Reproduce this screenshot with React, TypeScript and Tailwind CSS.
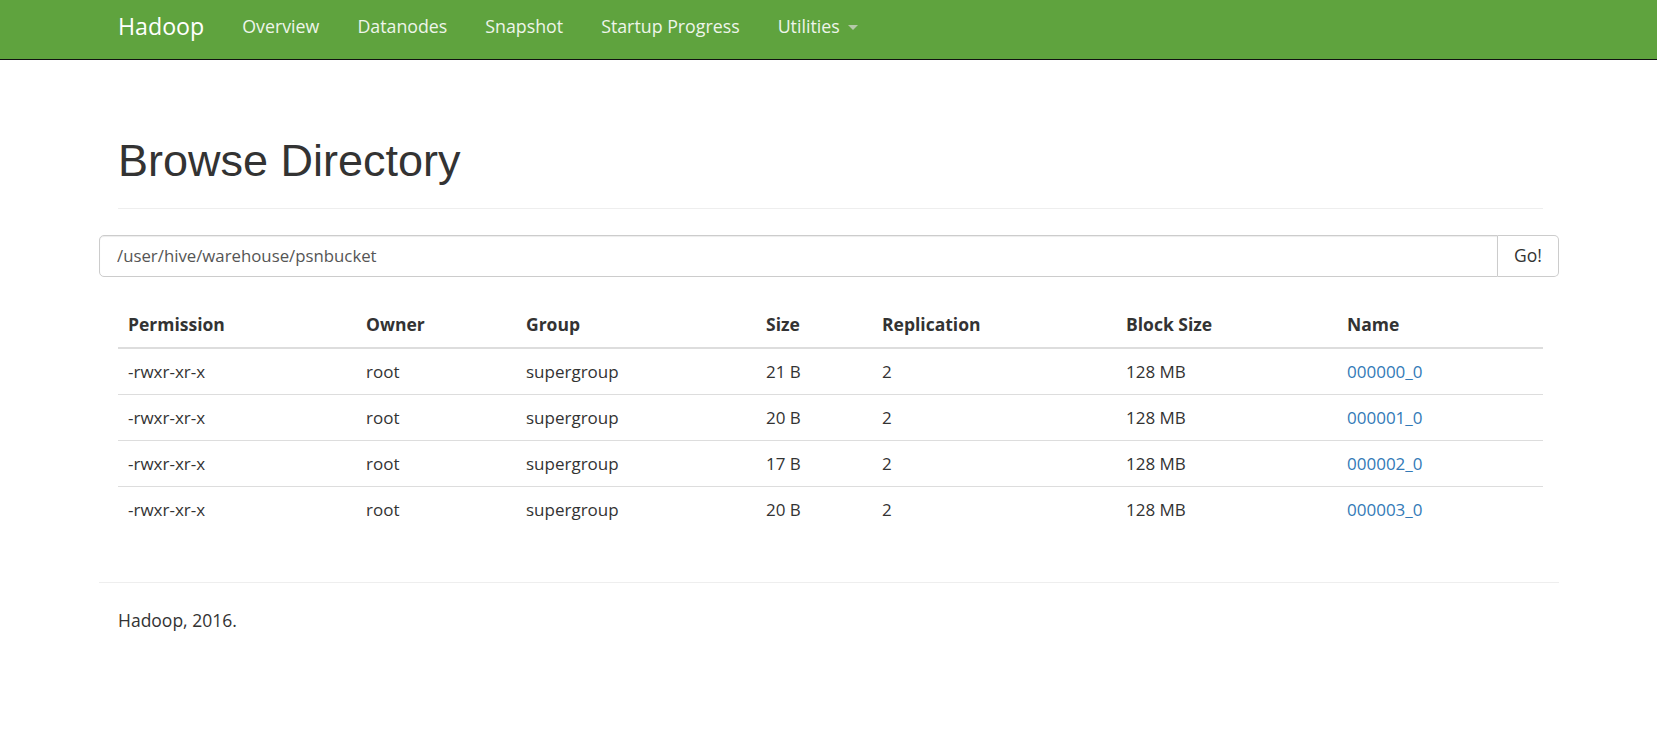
const files = [
  { name: "000000_0", size: "21 B" },
  { name: "000001_0", size: "20 B" },
  { name: "000002_0", size: "17 B" },
  { name: "000003_0", size: "20 B" },
];

const navLinks = ["Overview", "Datanodes", "Snapshot", "Startup Progress"];

function Navbar() {
  return (
    <header className="h-[60px] bg-[#5fa33e] border-b border-[#111]">
      <div className="ml-[99px] w-[1460px] pl-[19px] flex items-start pt-[14px]">
        <a className="text-[23.2px] leading-[25px] text-white pr-[19px]">Hadoop</a>
        {navLinks.map((l) => (
          <a key={l} className="px-[19px] text-[17.8px] leading-[25px] text-[#eef5ea]">
            {l}
          </a>
        ))}
        <a className="px-[19px] text-[17.8px] leading-[25px] text-[#eef5ea] flex items-center">
          Utilities
          <span className="ml-[8px] mt-[2px] w-0 h-0 border-t-[5px] border-t-[#b5c9a9] border-x-[5px] border-x-transparent" />
        </a>
      </div>
    </header>
  );
}

export default function App() {
  return (
    <div className="min-h-screen bg-white text-[#333] text-[17.5px] leading-[25px] font-['Open_Sans',sans-serif]">
      <Navbar />
      <div className="ml-[99px] w-[1460px]">
        {/* page header */}
        <div className="pl-[19px] pr-[16px] pt-[76px]">
          <div className="pb-[22px] border-b border-[#eee]">
            <h1 className="text-[45px] leading-[49.5px] font-['Liberation_Sans',Arial,sans-serif] text-[#333]">
              Browse Directory
            </h1>
          </div>
        </div>

        {/* path box */}
        <form className="mt-[26px] flex h-[42px]" onSubmit={(e) => e.preventDefault()}>
          <input
            type="text"
            defaultValue="/user/hive/warehouse/psnbucket"
            className="flex-1 min-w-0 border border-[#ccc] rounded-l-[5px] pl-[17px] pr-[15px] text-[16.8px] text-[#555] outline-none shadow-[inset_0_1px_1px_rgba(0,0,0,0.075)]"
          />
          <button
            type="submit"
            className="w-[61px] border border-l-0 border-[#ccc] rounded-r-[5px] bg-white text-[17.5px] text-[#333]"
          >
            Go!
          </button>
        </form>

        {/* listing */}
        <div className="pl-[19px] pr-[16px] mt-[25px]">
          <table className="w-full border-collapse text-left">
            <thead>
              <tr className="border-b-2 border-[#ddd]">
                <th className="w-[238px] px-[10px] py-[10px] font-bold">Permission</th>
                <th className="w-[160px] px-[10px] py-[10px] font-bold">Owner</th>
                <th className="w-[240px] px-[10px] py-[10px] font-bold">Group</th>
                <th className="w-[116px] px-[10px] py-[10px] font-bold">Size</th>
                <th className="w-[244px] px-[10px] py-[10px] font-bold">Replication</th>
                <th className="w-[221px] px-[10px] py-[10px] font-bold">Block Size</th>
                <th className="px-[10px] py-[10px] font-bold">Name</th>
              </tr>
            </thead>
            <tbody className="text-[17px]">
              {files.map((f, i) => (
                <tr key={f.name} className={i > 0 ? "border-t border-[#ddd]" : ""}>
                  <td className="px-[10px] py-[10px]">-rwxr-xr-x</td>
                  <td className="px-[10px] py-[10px]">root</td>
                  <td className="px-[10px] py-[10px]">supergroup</td>
                  <td className="px-[10px] py-[10px]">{f.size}</td>
                  <td className="px-[10px] py-[10px]">2</td>
                  <td className="px-[10px] py-[10px]">128 MB</td>
                  <td className="px-[10px] py-[10px]">
                    <a className="text-[#337ab7] cursor-pointer">{f.name}</a>
                  </td>
                </tr>
              ))}
            </tbody>
          </table>
        </div>

        {/* footer */}
        <div className="mt-[50px] border-t border-[#eee] pt-[25px] pl-[19px]">
          <p>Hadoop, 2016.</p>
        </div>
      </div>
    </div>
  );
}
